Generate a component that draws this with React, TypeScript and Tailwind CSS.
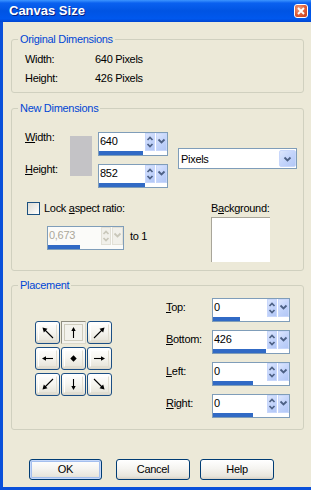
import React from "react";

function UpDown({ disabled }: { disabled?: boolean }) {
  const c = disabled ? "#c9c7ba" : "#4d6185";
  return (
    <div
      className={
        disabled
          ? "w-[10px] h-full flex items-center justify-center bg-[#f1f0ea] border border-[#e2e0d6]"
          : "w-[10px] h-full flex items-center justify-center bg-[linear-gradient(135deg,#dce6fd_0%,#c3d4fb_50%,#b2c7f6_100%)] border border-[#c8d7fb]"
      }
    >
      <svg width="8" height="16" viewBox="0 0 8 16">
        <polyline points="1.5,6 4,3.5 6.5,6" fill="none" stroke={c} strokeWidth="1.7" />
        <polyline points="1.5,10 4,12.5 6.5,10" fill="none" stroke={c} strokeWidth="1.7" />
      </svg>
    </div>
  );
}

function DropBtn({ disabled, big }: { disabled?: boolean; big?: boolean }) {
  const c = disabled ? "#c9c7ba" : "#4d6185";
  return (
    <div
      className={
        disabled
          ? "w-[11px] h-full flex items-center justify-center bg-[#f1f0ea] border border-[#e2e0d6]"
          : big
          ? "w-[17px] h-[17px] flex items-center justify-center rounded-[2px] bg-[linear-gradient(135deg,#dce6fd_0%,#c3d4fb_50%,#b2c7f6_100%)] border border-[#c8d7fb]"
          : "w-[11px] h-full flex items-center justify-center bg-[linear-gradient(135deg,#dce6fd_0%,#c3d4fb_50%,#b2c7f6_100%)] border border-[#c8d7fb]"
      }
    >
      <svg width="9" height="8" viewBox="0 0 9 8" className={big ? "" : "-mt-[2px]"}>
        <polyline points="1.5,2.5 4.5,5.5 7.5,2.5" fill="none" stroke={c} strokeWidth="1.8" />
      </svg>
    </div>
  );
}

function Spin({
  value,
  bar,
  wide,
  mid,
  disabled,
}: {
  value: string;
  bar: number;
  wide?: boolean;
  mid?: boolean;
  disabled?: boolean;
}) {
  const w = wide ? "w-[78px]" : mid ? "w-[77px]" : "w-[70px]";
  return (
    <div
      className={`${w} h-[24px] flex flex-col border border-[#7f9db9] ${
        disabled ? "bg-[#fbfbf9]" : "bg-white"
      }`}
    >
      <div className="flex h-[18px]">
        <div
          className={`flex-1 pl-[1px] text-[11px] leading-[16px] ${
            disabled ? "text-[#aca899]" : "text-black"
          }`}
        >
          {value}
        </div>
        <UpDown disabled={disabled} />
        <div className="w-[1px]" />
        <DropBtn disabled={disabled} />
      </div>
      <div className="h-[4px] flex">
        <div className="h-full bg-[#316ac5]" style={{ width: bar }} />
      </div>
    </div>
  );
}

type Dir = "ul" | "u" | "ur" | "l" | "c" | "r" | "dl" | "d" | "dr";

function Arrow({ dir }: { dir: Dir }) {
  const s = { stroke: "#000", strokeWidth: 1.1, fill: "none" };
  let body: React.ReactNode = null;
  switch (dir) {
    case "u":
      body = (
        <>
          <path d="M6.5 12V4" {...s} />
          <polygon points="6.5,1 4.3,5 8.7,5" fill="#000" />
        </>
      );
      break;
    case "d":
      body = (
        <>
          <path d="M6.5 1V9" {...s} />
          <polygon points="6.5,12 4.3,8 8.7,8" fill="#000" />
        </>
      );
      break;
    case "l":
      body = (
        <>
          <path d="M12 6.5H4" {...s} />
          <polygon points="1,6.5 5,4.3 5,8.7" fill="#000" />
        </>
      );
      break;
    case "r":
      body = (
        <>
          <path d="M1 6.5H9" {...s} />
          <polygon points="12,6.5 8,4.3 8,8.7" fill="#000" />
        </>
      );
      break;
    case "ul":
      body = (
        <>
          <path d="M12 12L3.5 3.5" {...s} />
          <polygon points="1.5,1.5 6.5,2.8 2.8,6.5" fill="#000" />
        </>
      );
      break;
    case "ur":
      body = (
        <>
          <path d="M1 12L9.5 3.5" {...s} />
          <polygon points="11.5,1.5 6.5,2.8 10.2,6.5" fill="#000" />
        </>
      );
      break;
    case "dl":
      body = (
        <>
          <path d="M12 1L3.5 9.5" {...s} />
          <polygon points="1.5,11.5 2.8,6.5 6.5,10.2" fill="#000" />
        </>
      );
      break;
    case "dr":
      body = (
        <>
          <path d="M1 1L9.5 9.5" {...s} />
          <polygon points="11.5,11.5 10.2,6.5 6.5,10.2" fill="#000" />
        </>
      );
      break;
    case "c":
      body = <polygon points="6.5,3.3 9.7,6.5 6.5,9.7 3.3,6.5" fill="#000" />;
      break;
  }
  return (
    <svg width="13" height="13" viewBox="0 0 13 13">
      {body}
    </svg>
  );
}

function PBtn({ dir, selected }: { dir: Dir; selected?: boolean }) {
  if (selected) {
    return (
      <div className="w-[25px] h-[23px] flex p-[2px] border border-t-[#8f8d80] border-l-[#8f8d80] border-r-[#dcd9cb] border-b-[#dcd9cb] bg-[#f3f2ec]">
        <div className="flex-1 flex items-center justify-center border border-[#cfccbd]">
          <Arrow dir={dir} />
        </div>
      </div>
    );
  }
  return (
    <div className="w-[25px] h-[23px] flex rounded-[3px] border border-[#1c4f84] bg-[linear-gradient(180deg,#ffffff_0%,#f7f6f1_45%,#e9e7dd_85%,#d9d5c8_100%)] p-[2px]">
      <div className="flex-1 flex items-center justify-center border border-[#e1ded2] border-t-white border-l-white">
        <Arrow dir={dir} />
      </div>
    </div>
  );
}

function Btn({ label, def, w }: { label: string; def?: boolean; w: string }) {
  return (
    <div
      className={`${w} h-[21px] flex items-center justify-center rounded-[3px] border border-[#003c74] bg-[linear-gradient(180deg,#ffffff_0%,#f5f4f0_45%,#e8e6dd_85%,#d6d0c5_100%)] ${
        def ? "shadow-[inset_0_0_0_1px_#c6d8f9,inset_0_0_0_2px_#a4bfee]" : ""
      }`}
    >
      {label}
    </div>
  );
}

function Legend({ children }: { children: React.ReactNode }) {
  return (
    <legend className="ml-[6px] px-[2px] text-[#0046d5] leading-[14px]">{children}</legend>
  );
}

export default function App() {
  return (
    <div className="w-[311px] h-[490px] flex flex-col bg-[#0a50da] font-['Liberation_Sans',Arial,sans-serif] text-[11px] tracking-[-0.3px] text-black select-none overflow-hidden">
      {/* Title bar */}
      <div className="h-[22px] flex items-center pl-[9px] pr-[3px] bg-[linear-gradient(180deg,#3d95ff_0%,#0a61f0_14%,#0054e3_50%,#0058ee_85%,#0045d2_100%)]">
        <span className="flex-1 text-white font-bold text-[13px] tracking-normal leading-[16px] [text-shadow:1px_1px_0_#0a1f80]">
          Canvas Size
        </span>
        <div className="w-[14px] h-[14px] flex items-center justify-center rounded-[3px] border border-white bg-[radial-gradient(circle_at_35%_30%,#f0a080_0%,#e0603a_50%,#c2381a_100%)]">
          <svg width="8" height="8" viewBox="0 0 8 8">
            <path d="M1 1L7 7M7 1L1 7" stroke="#fff" strokeWidth="1.9" />
          </svg>
        </div>
      </div>

      {/* Body */}
      <div className="flex-1 ml-[3px] mb-[3px] bg-[#ece9d8] flex flex-col pl-[8px] pr-[7px]">
        {/* Original Dimensions */}
        <fieldset className="mt-[10px] h-[61px] border border-[#d0d0bf] rounded-[3px]">
          <Legend>Original Dimensions</Legend>
          <div className="pl-[13px] pt-[4px] leading-[19px]">
            <div className="flex">
              <div className="w-[70px]">Width:</div>
              <div>640 Pixels</div>
            </div>
            <div className="flex">
              <div className="w-[70px]">Height:</div>
              <div>426 Pixels</div>
            </div>
          </div>
        </fieldset>

        {/* New Dimensions */}
        <fieldset className="mt-[8px] h-[170px] border border-[#d0d0bf] rounded-[3px]">
          <Legend>New Dimensions</Legend>
          <div className="pl-[13px] pt-[15px]">
            <div className="flex items-start">
              <div className="w-[45px] flex flex-col gap-[18px] leading-[14px]">
                <div>
                  <span className="underline">W</span>idth:
                </div>
                <div>
                  <span className="underline">H</span>eight:
                </div>
              </div>
              <div className="w-[22px] h-[40px] mt-[6px] bg-[#c4c3c6]" />
              <div className="ml-[6px] mt-[2px] flex flex-col gap-[8px]">
                <Spin value="640" bar={44} />
                <Spin value="852" bar={46} />
              </div>
              <div className="ml-[10px] mt-[18px] w-[119px] h-[21px] flex items-center border border-[#7f9db9] bg-white pl-[2px] pr-[0px]">
                <div className="flex-1 leading-[14px]">Pixels</div>
                <DropBtn big />
              </div>
            </div>

            <div className="flex mt-[13px]">
              <div className="w-[184px] ml-[2px] flex flex-col">
                <div className="flex items-center h-[14px] gap-[4px]">
                  <div className="w-[13px] h-[13px] border border-[#1c5180] bg-[linear-gradient(135deg,#dcdbd5_0%,#eeede8_50%,#ffffff_100%)]" />
                  <div className="leading-[14px]">
                    Lock <span className="underline">a</span>spect ratio:
                  </div>
                </div>
                <div className="flex items-start mt-[11px] ml-[20px]">
                  <Spin value="0,673" bar={32} mid disabled />
                  <div className="ml-[6px] mt-[3px] leading-[14px]">to 1</div>
                </div>
              </div>
              <div className="flex flex-col">
                <div className="leading-[14px]">
                  B<span className="underline">a</span>ckground:
                </div>
                <div className="mt-[2px] w-[59px] h-[45px] bg-white border-t border-l border-[#a9a69a]" />
              </div>
            </div>
          </div>
        </fieldset>

        {/* Placement */}
        <fieldset className="mt-[7px] h-[152px] border border-[#d0d0bf] rounded-[3px]">
          <Legend>Placement</Legend>
          <div className="pl-[13px] pt-[6px] flex items-start">
            <div className="ml-[10px] mt-[23px] grid grid-cols-[25px_25px_25px] gap-x-[1px] gap-y-[3px]">
              <PBtn dir="ul" />
              <PBtn dir="u" selected />
              <PBtn dir="ur" />
              <PBtn dir="l" />
              <PBtn dir="c" />
              <PBtn dir="r" />
              <PBtn dir="dl" />
              <PBtn dir="d" />
              <PBtn dir="dr" />
            </div>
            <div className="ml-[54px] flex flex-col gap-[8px]">
              <div className="flex items-start">
                <div className="w-[46px] mt-[2px] leading-[14px]">
                  <span className="underline">T</span>op:
                </div>
                <Spin value="0" bar={27} wide />
              </div>
              <div className="flex items-start">
                <div className="w-[46px] mt-[2px] leading-[14px]">
                  <span className="underline">B</span>ottom:
                </div>
                <Spin value="426" bar={53} wide />
              </div>
              <div className="flex items-start">
                <div className="w-[46px] mt-[2px] leading-[14px]">
                  <span className="underline">L</span>eft:
                </div>
                <Spin value="0" bar={40} wide />
              </div>
              <div className="flex items-start">
                <div className="w-[46px] mt-[2px] leading-[14px]">
                  <span className="underline">R</span>ight:
                </div>
                <Spin value="0" bar={40} wide />
              </div>
            </div>
          </div>
        </fieldset>

        {/* Buttons */}
        <div className="flex mt-[29px] ml-[18px]">
          <Btn label="OK" def w="w-[73px]" />
          <div className="ml-[14px]">
            <Btn label="Cancel" w="w-[74px]" />
          </div>
          <div className="ml-[10px]">
            <Btn label="Help" w="w-[74px]" />
          </div>
        </div>
      </div>
    </div>
  );
}
